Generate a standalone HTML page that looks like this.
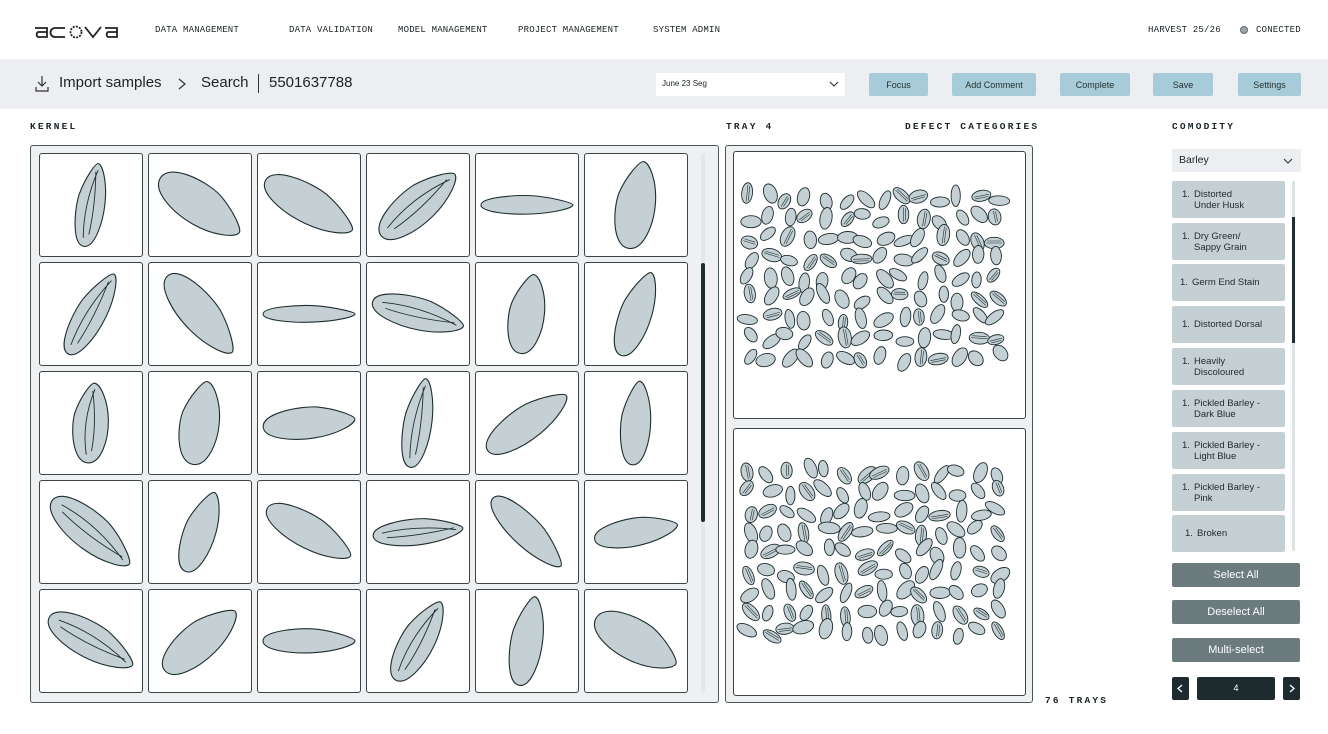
<!DOCTYPE html>
<html><head><meta charset="utf-8"><style>
*{box-sizing:border-box;margin:0;padding:0}
body{width:1328px;height:734px;background:#fff;font-family:"Liberation Sans",sans-serif;color:#1b2326;position:relative;overflow:hidden}
.a{position:absolute}
.mono{font-family:"Liberation Mono",monospace;font-size:9px;letter-spacing:.2px}
.lbl{font-family:"Liberation Mono",monospace;font-size:9.5px;letter-spacing:2.2px;font-weight:bold}
.btn{position:absolute;top:73px;height:23px;background:#a8cbd9;border-radius:2px;font-size:9px;display:flex;align-items:center;justify-content:center;color:#233}
.cell{position:absolute;width:104px;height:104px;border:1.3px solid #3b4446;border-radius:3px;background:#fff}
.item{position:absolute;left:1172px;width:113px;height:37px;background:#c5d0d4;border-radius:2px;font-size:9.5px;line-height:11px;display:flex;align-items:center;padding-left:10px;color:#1e2a2d}
.item>div{display:flex}
.item b{font-weight:normal;width:12px;flex:none}
.gb{position:absolute;left:1172px;width:128px;height:24px;background:#6b7b7e;border-radius:2px;color:#fff;font-size:11px;display:flex;align-items:center;justify-content:center}
</style></head><body>
<svg class="a" style="left:33px;top:23px" width="92" height="16" viewBox="0 0 92 16" fill="none" stroke="#222" stroke-width="1.8">
<path d="M2 5h12v9H5a3 3 0 0 1 0-5h9"/><path d="M32 5H22a4.5 4.5 0 0 0 0 9h10"/>
<circle cx="43" cy="9" r="5.5" stroke-dasharray="2 1.2"/><path d="M52 4l8 10l8-10"/><path d="M72 5h12v9h-9a3 3 0 0 1 0-5h9"/></svg>
<div class="a mono" style="left:155px;top:25px">DATA MANAGEMENT</div>
<div class="a mono" style="left:289px;top:25px">DATA VALIDATION</div>
<div class="a mono" style="left:398px;top:25px">MODEL MANAGEMENT</div>
<div class="a mono" style="left:518px;top:25px">PROJECT MANAGEMENT</div>
<div class="a mono" style="left:653px;top:25px">SYSTEM ADMIN</div>
<div class="a mono" style="left:1148px;top:25px">HARVEST 25/26</div>
<div class="a" style="left:1240px;top:26px;width:8px;height:8px;border-radius:50%;background:#9aa6a8;border:1px solid #667"></div>
<div class="a mono" style="left:1256px;top:25px">CONECTED</div>
<div class="a" style="left:0;top:59px;width:1328px;height:50px;background:#eceef1"></div>
<svg class="a" style="left:34px;top:75px" width="16" height="18" viewBox="0 0 16 18" fill="none" stroke="#333" stroke-width="1.2"><path d="M8 1v10M4 7l4 4 4-4M2 12v4h12v-4"/></svg>
<div class="a" style="left:59px;top:74px;font-size:15px">Import samples</div>
<svg class="a" style="left:177px;top:77px" width="10" height="14" fill="none" stroke="#333" stroke-width="1.2"><path d="M2 2l6 5-6 5"/></svg>
<div class="a" style="left:201px;top:74px;font-size:15px">Search</div>
<div class="a" style="left:258px;top:74px;width:1.3px;height:19px;background:#333"></div>
<div class="a" style="left:269px;top:74px;font-size:15px">5501637788</div>
<div class="a" style="left:656px;top:73px;width:189px;height:23px;background:#fff;font-size:8px;padding:6px 6px"><span>June 23 Seg</span>
<svg class="a" style="right:6px;top:8px" width="10" height="6" fill="none" stroke="#333" stroke-width="1.1"><path d="M1 1l4 4 4-4"/></svg></div>
<div class="btn" style="left:869px;width:59px">Focus</div>
<div class="btn" style="left:952px;width:84px">Add Comment</div>
<div class="btn" style="left:1060px;width:70px">Complete</div>
<div class="btn" style="left:1153px;width:60px">Save</div>
<div class="btn" style="left:1238px;width:63px">Settings</div>
<div class="a lbl" style="left:30px;top:121px">KERNEL</div>
<div class="a lbl" style="left:726px;top:121px">TRAY 4</div>
<div class="a lbl" style="left:905px;top:121px">DEFECT CATEGORIES</div>
<div class="a lbl" style="left:1172px;top:121px">COMODITY</div>
<div class="a lbl" style="left:1045px;top:695px">76 TRAYS</div>
<div class="a" style="left:30px;top:145px;width:689px;height:558px;background:#eef0f2;border:1.3px solid #4a5456;border-radius:3px"></div>
<div id="cells"></div>
<div class="a" style="left:701px;top:153px;width:4px;height:540px;background:#e4e7ea;border-radius:2px"></div>
<div class="a" style="left:701px;top:263px;width:4px;height:259px;background:#1e2e30;border-radius:2px"></div>
<div class="a" style="left:725px;top:145px;width:308px;height:558px;background:#eef0f2;border:1.3px solid #4a5456;border-radius:3px"></div>
<div class="a" style="left:733px;top:151px;width:293px;height:268px;background:#fff;border:1.3px solid #3b4446;border-radius:3px"></div>
<div class="a" style="left:733px;top:428px;width:293px;height:268px;background:#fff;border:1.3px solid #3b4446;border-radius:3px"></div>
<svg id="tray" class="a" style="left:0;top:0" width="1328" height="734"></svg>
<div class="a" style="left:1172px;top:149px;width:129px;height:23px;background:#eceef1;font-size:10.5px;padding:5px 7px">Barley
<svg class="a" style="right:8px;top:9px" width="10" height="6" fill="none" stroke="#333" stroke-width="1.1"><path d="M1 1l4 4 4-4"/></svg></div>
<div class="item" style="top:181px"><div><b>1.</b><span>Distorted<br>Under Husk</span></div></div>
<div class="item" style="top:223px"><div><b>1.</b><span>Dry Green/<br>Sappy Grain</span></div></div>
<div class="item" style="top:264px;padding-left:8px"><div><b>1.</b><span>Germ End Stain</span></div></div>
<div class="item" style="top:306px"><div><b>1.</b><span>Distorted Dorsal</span></div></div>
<div class="item" style="top:348px"><div><b>1.</b><span>Heavily<br>Discoloured</span></div></div>
<div class="item" style="top:390px"><div><b>1.</b><span>Pickled Barley -<br>Dark Blue</span></div></div>
<div class="item" style="top:432px"><div><b>1.</b><span>Pickled Barley -<br>Light Blue</span></div></div>
<div class="item" style="top:474px"><div><b>1.</b><span>Pickled Barley -<br>Pink</span></div></div>
<div class="item" style="top:515px;padding-left:13px"><div><b>1.</b><span>Broken</span></div></div>
<div class="a" style="left:1292px;top:181px;width:3px;height:370px;background:#dfe3e6"></div>
<div class="a" style="left:1292px;top:217px;width:3px;height:126px;background:#1e2e30"></div>
<div class="gb" style="top:563px">Select All</div>
<div class="gb" style="top:600px">Deselect All</div>
<div class="gb" style="top:638px">Multi-select</div>
<div class="a" style="left:1172px;top:677px;width:17px;height:23px;background:#1e2b2e;border-radius:2px"><svg width="17" height="23" fill="none" stroke="#fff" stroke-width="1.3"><path d="M10 8l-4 3.5 4 3.5"/></svg></div>
<div class="a" style="left:1197px;top:677px;width:78px;height:23px;background:#1e2b2e;border-radius:2px;color:#fff;font-size:9px;text-align:center;line-height:23px">4</div>
<div class="a" style="left:1283px;top:677px;width:17px;height:23px;background:#1e2b2e;border-radius:2px"><svg width="17" height="23" fill="none" stroke="#fff" stroke-width="1.3"><path d="M7 8l4 3.5-4 3.5"/></svg></div>
<script>
var cx=[39,148,257,366,475,584],ry=[153,262,371,480,589];
var rots=[-80,35,30,-40,0,-80,-60,50,0,15,-80,-70,-85,-80,-5,-80,-35,-85,40,-70,30,-5,45,-10,30,-40,0,-60,-80,30];
var lens=[42,48,50,48,46,44,46,50,46,47,40,44,40,42,46,45,48,42,50,42,48,45,48,42,48,46,46,45,45,46];
var wid=[15,22,20,20,10,21,16,20,9,17,19,17,19,21,17,15,18,16,20,17,18,14,16,15,19,20,13,18,17,22];
var h='',i=0;
for(var r=0;r<5;r++)for(var c=0;c<6;c++){var L=lens[i],W=wid[i];
h+='<div class="cell" style="left:'+cx[c]+'px;top:'+ry[r]+'px"><svg width="102" height="102"><g transform="translate(51 51) rotate('+rots[i]+')"><path d="M'+(-L)+' 0C'+(-L)+' '+(-W*.8)+' '+(-L*.2)+' '+(-W*1.05)+' '+(L*.2)+' '+(-W*.9)+'C'+(L*.6)+' '+(-W*.7)+' '+L+' '+(-W*.2)+' '+L+' 0C'+L+' '+(W*.3)+' '+(L*.6)+' '+(W*.8)+' '+(L*.1)+' '+(W*.9)+'C'+(-L*.4)+' '+W+' '+(-L)+' '+(W*.7)+' '+(-L)+' 0Z" fill="#c5d0d4" stroke="#1e2e30" stroke-width="1.1"/>'+(i%3==0?'<path d="M'+(-L*.8)+' -2Q0 '+(-W*.5)+' '+(L*.85)+' 1M'+(-L*.7)+' 3Q0 '+(W*.3)+' '+(L*.8)+' -1" fill="none" stroke="#1e2e30" stroke-width=".9"/>':'')+'</g></svg></div>';i++;}
document.getElementById('cells').innerHTML=h;
var s=1,rnd=function(){s=(s*16807)%2147483647;return s/2147483647;};
var t='';
[[198,378],[472,652]].forEach(function(b){
for(var y=b[0];y<b[1];y+=20)for(var x=750;x<1010;x+=19){
var yy=y+(rnd()-.5)*10,xx=x+(rnd()-.5)*8; if(yy>b[1]-3)continue;
var l=8+rnd()*3,w=4.5+rnd()*2,a=rnd()*180;
t+='<g transform="translate('+xx.toFixed(1)+' '+yy.toFixed(1)+') rotate('+a.toFixed(0)+')"><ellipse rx="'+l.toFixed(1)+'" ry="'+w.toFixed(1)+'" fill="#c5d0d4" stroke="#1e2e30" stroke-width=".9"/>'+(rnd()<.3?'<path d="M-'+(l-2)+' 0H'+(l-2)+'M-'+(l-3)+' -2H'+(l-3)+'" stroke="#1e2e30" stroke-width=".6"/>':'')+'</g>';}});
document.getElementById('tray').innerHTML=t;
</script>
</body></html>
